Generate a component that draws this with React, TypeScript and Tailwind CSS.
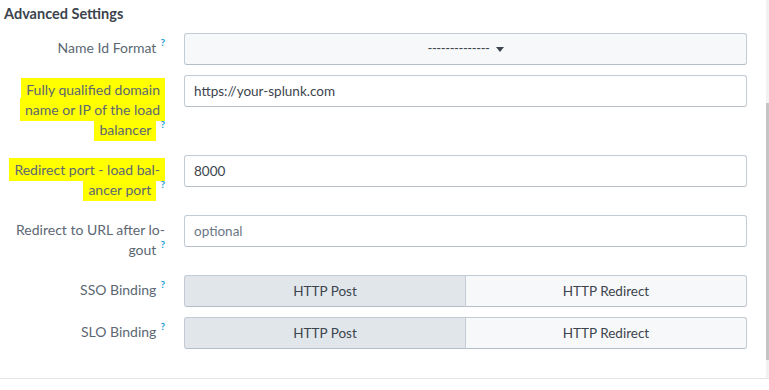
import React from "react";

const Help = () => (
  <sup className="ml-[4px] text-[10px] font-bold text-[#1a9bd8] -top-[0.7em]">?</sup>
);

const Mark: React.FC<{ children: React.ReactNode }> = ({ children }) => (
  <span className="bg-[#ffff00] box-decoration-clone px-[5px] py-[3px]">{children}</span>
);

const Row: React.FC<{ label: React.ReactNode; children: React.ReactNode }> = ({ label, children }) => (
  <div className="flex items-start mb-[10px]">
    <label className="w-[165px] shrink-0 text-right py-[5px] leading-5 text-[14px] text-[#5c6773]">
      {label}
    </label>
    <div className="ml-[19px] w-[563px]">{children}</div>
  </div>
);

const TextInput: React.FC<{ value?: string; placeholder?: string }> = ({ value, placeholder }) => (
  <div className="h-[32px] flex items-center px-[9px] rounded-[3px] border border-[#c3cbd4] border-b-[#b5bec8] bg-white text-[13.5px]">
    {value ? (
      <span className="text-[#3c444d]">{value}</span>
    ) : (
      <span className="text-[#6b7785]">{placeholder}</span>
    )}
  </div>
);

const Segmented = () => (
  <div className="h-[32px] flex text-[13.5px] text-[#3c444d]">
    <div className="flex-1 flex items-center justify-center rounded-l-[3px] border border-[#c3cbd4] border-b-[#b5bec8] bg-[#e1e6eb]">
      HTTP Post
    </div>
    <div className="flex-1 flex items-center justify-center rounded-r-[3px] border border-l-0 border-[#c3cbd4] border-b-[#b5bec8] bg-[#f7f8fa]">
      HTTP Redirect
    </div>
  </div>
);

export default function App() {
  return (
    <div className="w-[769px] h-[390px] bg-white font-['Lato','Liberation_Sans',sans-serif]">
      <div className="flex border-b border-[#e1e6eb]">
        <div className="flex-1 pb-[19px]">
          <h3 className="h-[33px] px-[4px] pt-[3px] text-[14.5px] font-bold text-[#3c444d]">
            Advanced Settings
          </h3>
          <Row label={<>Name Id Format<Help /></>}>
            <div className="h-[32px] flex items-center justify-center gap-[6px] rounded-[3px] border border-[#c3cbd4] border-b-[#b5bec8] bg-[#f7f8fa] text-[13px] text-[#3c444d]">
              <span className="tracking-[-0.4px]">--------------</span>
              <svg width="8" height="5" viewBox="0 0 8 5">
                <path d="M0 0h8L4 5z" fill="#3c444d" />
              </svg>
            </div>
          </Row>
          <Row
            label={
              <>
                <Mark>
                  Fully qualified domain
                  <br />
                  name or IP of the load
                  <br />
                  balancer
                </Mark>
                <Help />
              </>
            }
          >
            <TextInput value="https://your-splunk.com" />
          </Row>
          <Row
            label={
              <>
                <Mark>
                  Redirect port - load bal-
                  <br />
                  ancer port
                </Mark>
                <Help />
              </>
            }
          >
            <TextInput value="8000" />
          </Row>
          <Row
            label={
              <>
                Redirect to URL after lo-
                <br />
                gout
                <Help />
              </>
            }
          >
            <TextInput placeholder="optional" />
          </Row>
          <Row label={<>SSO Binding<Help /></>}>
            <Segmented />
          </Row>
          <Row label={<>SLO Binding<Help /></>}>
            <Segmented />
          </Row>
        </div>
        <div className="w-[3px] bg-[#f2f2f2]">
          <div className="mt-[103px] h-[257px] bg-[#c4c4c4]" />
        </div>
      </div>
    </div>
  );
}
